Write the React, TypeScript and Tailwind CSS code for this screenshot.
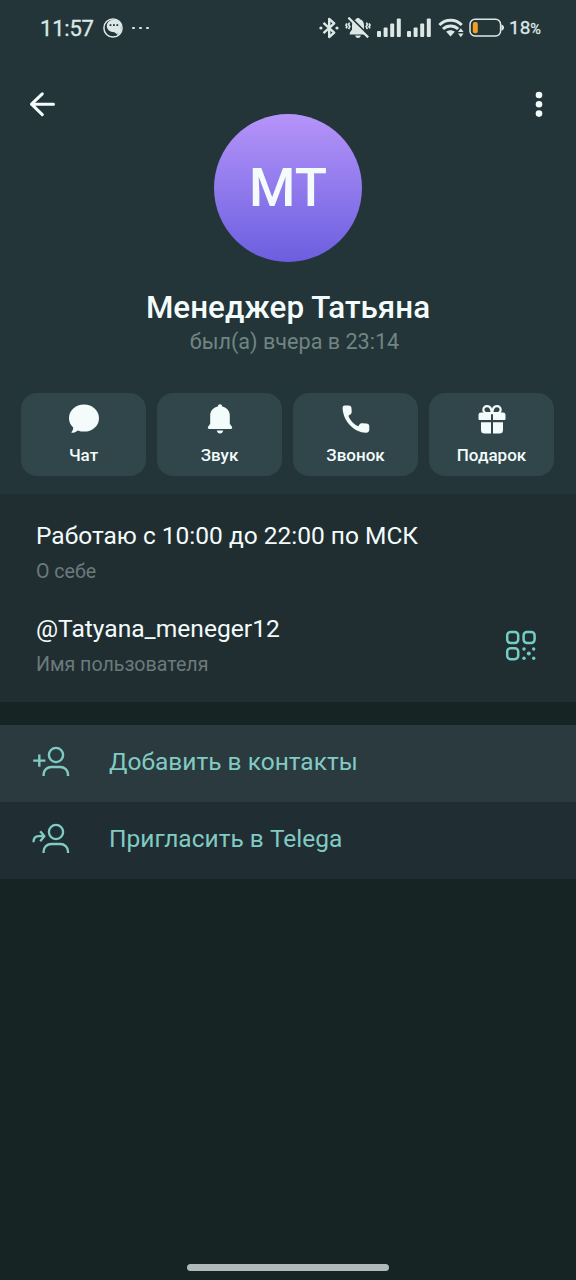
import React from 'react';

type IconProps = { className?: string };

const MessengerIcon: React.FC<IconProps> = ({ className }) => (
    <svg className={className} width="20" height="20" viewBox="0 0 20 20">
        <circle cx="10" cy="10" r="9.1" fill="none" stroke="currentColor" strokeWidth="1.5" />
        <path d="M10.8 1.8C15.6 1.8 18.4 4.4 18.4 8C18.4 11 16.3 13 14.2 13.8L14.4 16.4L11.4 14.2C7 14.2 3.8 11.6 3.8 8C3.8 4.4 6.8 1.8 10.8 1.8Z" fill="currentColor" />
        <path d="M14 12.6L14.4 17.6C16.8 16.1 18.2 14 18.7 10Z" fill="currentColor" />
        <path d="M6.6 7.2h1.8M10 7.2h1.8M13.4 7.2h1.8" stroke="#233539" strokeWidth="1.8" />
    </svg>
);

const BluetoothIcon: React.FC<IconProps> = ({ className }) => (
    <svg className={className} width="20" height="22" viewBox="0 0 20 22" fill="none" stroke="currentColor" strokeWidth="2.4">
        <path d="M4.5 5.8L15.2 15.6L10.2 20V2L15.2 6.4L4.5 16.2" strokeLinejoin="round" />
        <circle cx="1.9" cy="11" r="1.6" fill="currentColor" stroke="none" />
        <circle cx="18" cy="11" r="1.6" fill="currentColor" stroke="none" />
    </svg>
);

const MutedBellIcon: React.FC<IconProps> = ({ className }) => (
    <svg className={className} width="26" height="22" viewBox="0 0 26 22">
        <path d="M13 .9C14 .9 14.8 1.4 14.9 2.2C17.8 3 19 5.3 19 8.2V12.5L21 15.8V17.5H4.8V15.8L7 12.5V8.2C7 5.3 8.2 3 11.1 2.2C11.2 1.4 12 .9 13 .9ZM10.2 18.6H15.8C15.4 20.4 14.3 21 13 21C11.7 21 10.6 20.4 10.2 18.6Z" fill="currentColor" />
        <path d="M5.7 .6L24.6 19.5" stroke="#233539" strokeWidth="2.2" />
        <path d="M3.4 .6L23.2 20.4" stroke="currentColor" strokeWidth="2.2" />
        <path d="M4.6 5.6L3.6 7.4L4.8 9.6L3.6 12.2M1.9 6.4L1 8.2L2 9.8L1 11.4M21.4 5.6L22.4 7.4L21.2 9.6L22.4 12.2M24.1 6.4L25 8.2L24 9.8L25 11.4" fill="none" stroke="currentColor" strokeWidth="1.7" />
    </svg>
);

const SignalIcon: React.FC<IconProps> = ({ className }) => (
    <svg className={className} width="25" height="20" viewBox="0 0 25 20" fill="currentColor">
        <rect x="0" y="13" width="4" height="6" rx="1" />
        <rect x="6.6" y="9.6" width="4" height="9.4" rx="1" />
        <rect x="13.2" y="5.4" width="4" height="13.6" rx="1" />
        <rect x="19.8" y="0.4" width="4" height="18.6" rx="1" />
    </svg>
);

const WifiIcon: React.FC<IconProps> = ({ className }) => (
    <svg className={className} width="26" height="20" viewBox="0 0 26 20">
        <path d="M1.4 7C7.6.7 17.6.7 23.8 7M5 11C9.2 7 16 7 20.2 11" fill="none" stroke="currentColor" strokeWidth="3" />
        <path d="M8.2 13.8C10.8 11.8 14.2 11.8 16.8 13.8L12.5 18.6Z" fill="currentColor" />
        <path d="M22.8 10.2L25.6 13.9H20ZM22.8 19.2L25.6 15.4H20Z" fill="currentColor" />
    </svg>
);

const BatteryIcon: React.FC<IconProps> = ({ className }) => (
    <svg className={className} width="36" height="20" viewBox="0 0 36 20">
        <rect x="1" y="1.2" width="30.6" height="16.8" rx="5" fill="none" stroke="currentColor" strokeWidth="1.5" />
        <path d="M32.4 6.4C34.2 6.8 35 8 35 9.6C35 11.2 34.2 12.4 32.4 12.8Z" fill="currentColor" />
        <rect x="3.8" y="3.9" width="5" height="11.4" rx="2" fill="#f0a020" />
    </svg>
);

const ChatIcon: React.FC<IconProps> = ({ className }) => (
    <svg className={className} width="30" height="30" viewBox="0 0 30 30" fill="currentColor">
        <path d="M15 .6C23.4.6 30 6.5 30 14.2C30 22 23.4 27.6 15 27.6C12.8 27.6 10.7 27.2 8.8 26.4C7 28 5 28.8 3 28.8C2.3 28.8 2.2 28.2 2.7 27.7C3.8 26.5 4.3 25 4.2 23.5C1.6 21.1 0 17.9 0 14.2C0 6.5 6.6.6 15 .6Z" />
    </svg>
);

const BellIcon: React.FC<IconProps> = ({ className }) => (
    <svg className={className} width="30" height="30" viewBox="0 0 30 30" fill="currentColor">
        <path d="M15 .2C16.2.2 17 1 17.2 2.5C22 3.6 24.8 7.2 24.8 11.8V19.8L26.9 22.8C27.6 24 27 25 25.8 25H4.2C3 25 2.4 24 3.1 22.8L5.2 19.8V11.8C5.2 7.2 8 3.6 12.8 2.5C13 1 13.8.2 15 .2Z" />
        <path d="M11.8 26.6H18.2C17.7 28.6 16.8 29.6 15 29.6C13.2 29.6 12.3 28.6 11.8 26.6Z" />
    </svg>
);

const PhoneIcon: React.FC<IconProps> = ({ className }) => (
    <svg className={className} width="30" height="30" viewBox="0 0 30 30" fill="currentColor">
        <path d="M3.6 1.4H7.4C9.6 1.4 10.4 2.4 10.5 4.2L10.7 7.2C10.8 9 10.2 9.9 8.8 10.8L7.4 11.7C9 16.2 12.8 20.3 17.2 22.2L18.3 20.7C19.2 19.5 20.2 19.1 21.6 19.2L25.2 19.5C27.4 19.7 28.3 20.6 28.3 22.4V25.6C28.3 27.8 27.2 28.8 24.8 28.7C13.6 28.2 2.4 17.8 1.6 4.4C1.5 2.4 2.2 1.4 3.6 1.4Z" />
    </svg>
);

const GiftIcon: React.FC<IconProps> = ({ className }) => (
    <svg className={className} width="30" height="30" viewBox="0 0 30 30" fill="currentColor">
        <path d="M4 8.6H14V16H2.5Q1.5 16 1.5 15V10.8Q1.5 8.6 4 8.6ZM16 8.6H26Q28.5 8.6 28.5 10.8V15Q28.5 16 27.5 16H16ZM4 18.2H14V29.4H7.5Q4 29.4 4 25.9ZM16 18.2H26V25.9Q26 29.4 22.5 29.4H16Z" />
        <path d="M14.6 9.1H10.5C4.8 9.1 5.3 2.2 10 2.2C13 2.2 14.6 5 14.6 9.1ZM15.4 9.1H19.5C25.2 9.1 24.7 2.2 20 2.2C17 2.2 15.4 5 15.4 9.1Z" fill="none" stroke="currentColor" strokeWidth="2.2" />
    </svg>
);

const QrIcon: React.FC<IconProps> = ({ className }) => (
    <svg className={className} width="32" height="32" viewBox="0 0 32 32">
        <g fill="none" stroke="currentColor" strokeWidth="2.5">
            <rect x="2.2" y="2" width="11" height="11" rx="3.4" />
            <rect x="18.6" y="2" width="11" height="11" rx="3.4" />
            <rect x="2.2" y="18.2" width="11" height="11" rx="3.4" />
        </g>
        <g fill="currentColor">
            <circle cx="19" cy="19" r="1.7" />
            <circle cx="28.7" cy="19" r="1.7" />
            <circle cx="23.8" cy="23.6" r="2" />
            <circle cx="19" cy="28.2" r="1.7" />
            <circle cx="28.7" cy="28.2" r="1.7" />
        </g>
    </svg>
);

const Person = () => (
    <>
        <circle cx="24" cy="9" r="7.1" />
        <path d="M11.6 30V28.6C11.6 24.2 15 21 19.4 21H28.2C32.6 21 36 24.2 36 28.6V30" />
    </>
);

const AddPersonIcon: React.FC<IconProps> = ({ className }) => (
    <svg className={className} width="38" height="32" viewBox="0 0 38 32" fill="none" stroke="currentColor" strokeWidth="2.4">
        <Person />
        <path d="M1.2 14.6H13.4M7.3 8.4V20.8" />
    </svg>
);

const InvitePersonIcon: React.FC<IconProps> = ({ className }) => (
    <svg className={className} width="38" height="32" viewBox="0 0 38 32" fill="none" stroke="currentColor" strokeWidth="2.3">
        <Person />
        <path d="M1.5 19.2C1.5 15.2 3.4 13.2 6.8 13.2H11.8M8.2 8.2L12.4 13.2L8.2 18.2" strokeLinejoin="round" />
    </svg>
);

const actions = [
    { label: 'Чат', Icon: ChatIcon },
    { label: 'Звук', Icon: BellIcon },
    { label: 'Звонок', Icon: PhoneIcon },
    { label: 'Подарок', Icon: GiftIcon },
];

const StatusBar = () => (
    <div className="flex h-14 items-center pl-10 pr-[34px] text-[#dce8e6]">
        <span className="w-[55px] pt-[2px] text-[22px] leading-7 tracking-[-0.2px] [-webkit-text-stroke:0.3px]">11:57</span>
        <MessengerIcon className="ml-2" />
        <div className="ml-[9px] flex gap-[4.5px]">
            <span className="size-[2.5px] rounded-full bg-current" />
            <span className="size-[2.5px] rounded-full bg-current" />
            <span className="size-[2.5px] rounded-full bg-current" />
        </div>
        <div className="ml-auto flex items-center">
            <BluetoothIcon />
            <MutedBellIcon className="ml-[6px]" />
            <SignalIcon className="ml-[6px]" />
            <SignalIcon className="ml-[5px]" />
            <WifiIcon className="ml-[6px]" />
            <BatteryIcon className="ml-[5px]" />
            <span className="ml-1 w-[33px] whitespace-nowrap pt-[2px] text-[19px] leading-7 [-webkit-text-stroke:0.3px]">18<span className="text-[14.5px]">%</span></span>
        </div>
    </div>
);

export default function App() {
    return (
        <div className="flex h-[1280px] w-[576px] flex-col overflow-hidden bg-[#172424] font-['Roboto','Noto_Sans',sans-serif] text-[#f3fcfb]">
            <header className="h-[494px] shrink-0 bg-[#233539]">
                <StatusBar />
                <div className="flex h-[206px] items-start justify-between px-[29px]">
                    <button className="mt-[35px] w-[27px]" aria-label="Назад">
                        <svg width="27" height="26" viewBox="0 0 27 26" fill="none" stroke="currentColor" strokeWidth="3" strokeLinecap="round" strokeLinejoin="round">
                            <path d="M24.5 13.2H2.5M13.3 2.8L2.5 13.2L13.3 23.6" />
                        </svg>
                    </button>
                    <div className="mt-[58px] flex size-[148px] items-center justify-center rounded-full bg-gradient-to-b from-[#b694f9] to-[#6c5edf]">
                        <span className="pt-px text-[53px] font-medium leading-none">МТ</span>
                    </div>
                    <button className="mt-[35px] flex w-[27px] justify-end pr-[2px]" aria-label="Меню">
                        <svg width="12" height="27" viewBox="0 0 12 27" fill="currentColor">
                            <circle cx="6" cy="4" r="3.3" />
                            <circle cx="6" cy="13.3" r="3.3" />
                            <circle cx="6" cy="22.6" r="3.3" />
                        </svg>
                    </button>
                </div>
                <h1 className="mt-7 text-center text-[31.4px] font-medium leading-9">Менеджер Татьяна</h1>
                <p className="pl-[13px] text-center text-[21.6px] leading-8 text-[#718583]">был(а) вчера в 23:14</p>
                <div className="mt-[35px] grid grid-cols-4 gap-[11px] pl-[21px] pr-[22px]">
                    {actions.map(({ label, Icon }) => (
                        <button key={label} className="flex h-[83px] flex-col items-center rounded-[16px] bg-[#30464b] pt-[11px]">
                            <Icon />
                            <span className="mt-[9px] text-[17px] font-medium leading-6">{label}</span>
                        </button>
                    ))}
                </div>
            </header>

            <section className="flex h-[208px] shrink-0 flex-col bg-[#202e32] pl-9 pr-[39px]">
                <div className="pt-[26px]">
                    <p className="text-[24.5px] leading-8">Работаю с 10:00 до 22:00 по МСК</p>
                    <p className="mt-[6px] text-[19.6px] leading-7 text-[#6b7a7c]">О себе</p>
                </div>
                <div className="mt-[27px] flex items-center justify-between">
                    <div>
                        <p className="text-[24.6px] leading-8">@Tatyana_meneger12</p>
                        <p className="mt-[6px] text-[19.6px] leading-7 text-[#6b7a7c]">Имя пользователя</p>
                    </div>
                    <QrIcon className="text-[#74cdc4]" />
                </div>
            </section>

            <section className="mt-[23px] shrink-0 text-[24.5px] text-[#81cbc4]">
                <button className="flex h-[77px] w-full items-center bg-[#2a3a3e] pb-1 pl-8">
                    <AddPersonIcon />
                    <span className="ml-[39px] pt-[2px]">Добавить в контакты</span>
                </button>
                <button className="flex h-[77px] w-full items-center bg-[#202d32] pb-1 pl-8">
                    <InvitePersonIcon />
                    <span className="ml-[39px] pt-[2px]">Пригласить в Telega</span>
                </button>
            </section>

            <div className="mx-auto mb-[9px] mt-auto h-[7px] w-[202px] rounded-full bg-[#b0baba]" />
        </div>
    );
}
